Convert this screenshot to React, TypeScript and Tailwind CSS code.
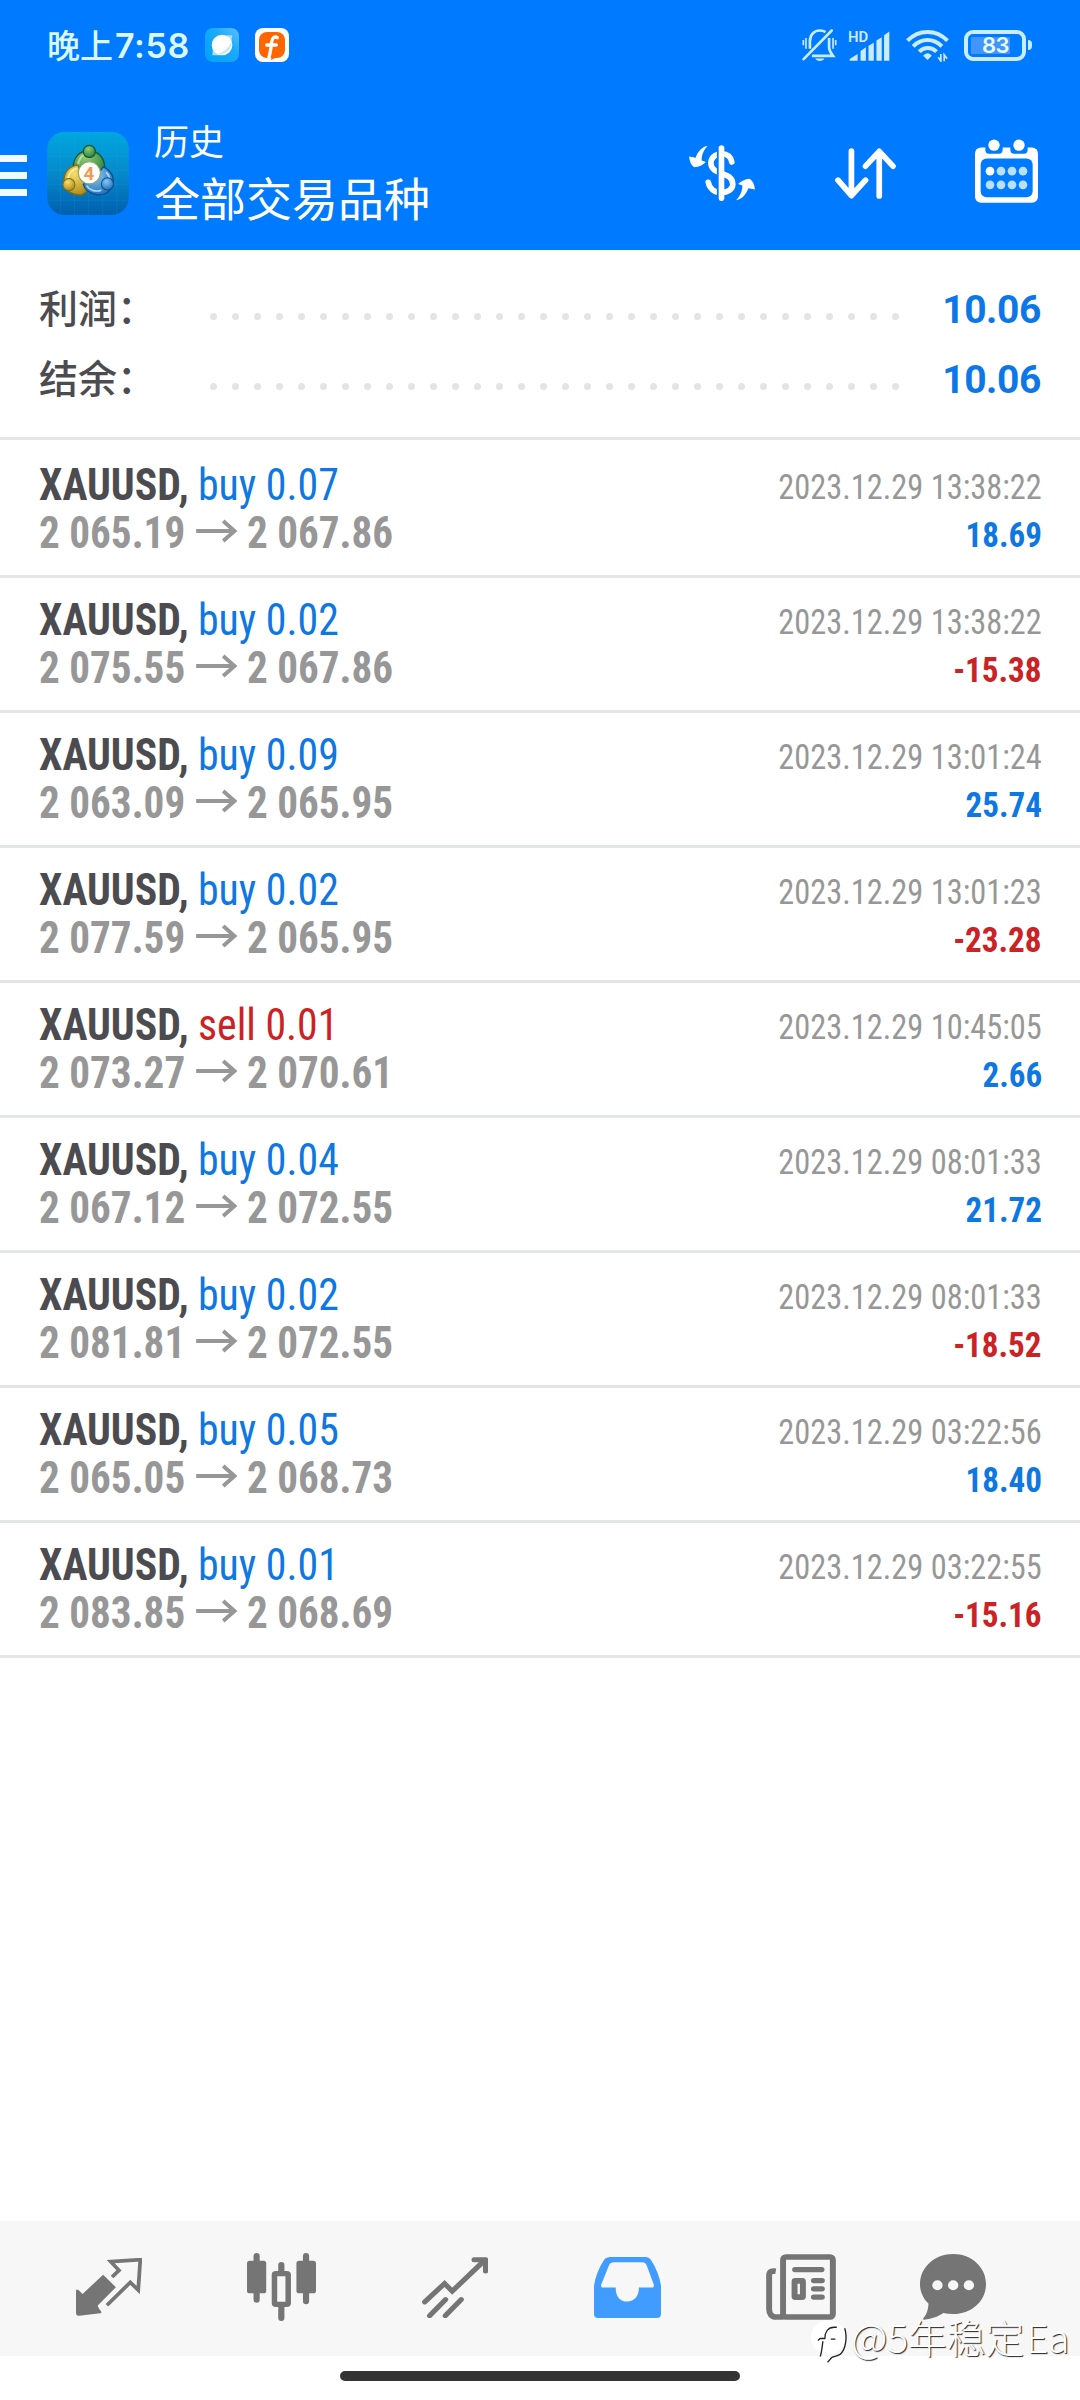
import React from "react";

const summary = [
  { label: "利润：", value: "10.06" },
  { label: "结余：", value: "10.06" },
];

const deals = [
  { type: "buy", volume: "0.07", open: "2 065.19", close: "2 067.86", time: "2023.12.29 13:38:22", profit: "18.69" },
  { type: "buy", volume: "0.02", open: "2 075.55", close: "2 067.86", time: "2023.12.29 13:38:22", profit: "-15.38" },
  { type: "buy", volume: "0.09", open: "2 063.09", close: "2 065.95", time: "2023.12.29 13:01:24", profit: "25.74" },
  { type: "buy", volume: "0.02", open: "2 077.59", close: "2 065.95", time: "2023.12.29 13:01:23", profit: "-23.28" },
  { type: "sell", volume: "0.01", open: "2 073.27", close: "2 070.61", time: "2023.12.29 10:45:05", profit: "2.66" },
  { type: "buy", volume: "0.04", open: "2 067.12", close: "2 072.55", time: "2023.12.29 08:01:33", profit: "21.72" },
  { type: "buy", volume: "0.02", open: "2 081.81", close: "2 072.55", time: "2023.12.29 08:01:33", profit: "-18.52" },
  { type: "buy", volume: "0.05", open: "2 065.05", close: "2 068.73", time: "2023.12.29 03:22:56", profit: "18.40" },
  { type: "buy", volume: "0.01", open: "2 083.85", close: "2 068.69", time: "2023.12.29 03:22:55", profit: "-15.16" },
];

const MutedBell = () => (
  <svg viewBox="0 0 106 102" className="h-[34px] w-[35px]" fill="none" stroke="#c9ecff" strokeWidth="8">
    <path d="M24 62V40C24 18 38 7 54 7C60 7 66 8 71 12" />
    <path d="M82 30V58C82 70 88 76 94 84H30" />
    <path d="M5 94L90 7" strokeLinecap="round" />
    <path d="M40 92H68C64 102 44 102 40 92Z" fill="#c9ecff" stroke="none" />
    <path d="M4 36V52M12 30V62M94 30V62M102 36V52" strokeWidth="5" />
  </svg>
);

const Signal = () => (
  <svg viewBox="0 0 124 98" className="h-[33px] w-[41px] overflow-visible" fill="#c9ecff">
    <text x="-3" y="38" fontSize="45" fontWeight="600" fontFamily="Roboto, sans-serif">HD</text>
    <path d="M2 95V90L26 75V95ZM35 95V66L51 54V95ZM59 95V50L75 41V95ZM83 95V34L99 24V95ZM106 95V18L122 7V95Z" />
  </svg>
);

const Wifi = () => (
  <svg viewBox="0 0 128 102" className="h-[34px] w-[43px]" fill="none" stroke="#c9ecff" strokeWidth="12">
    <path d="M4 38C38 3 90 3 124 38" />
    <path d="M21 55C46 30 82 30 107 55" />
    <path d="M39 71C54 56 76 56 91 71" />
    <path d="M64 96L51 83C58 73 70 73 77 83Z" fill="#c9ecff" stroke="none" />
    <path d="M104 78V99L96 88M114 100V80L123 92" strokeWidth="5" />
  </svg>
);

const Battery = () => (
  <div className="flex items-center gap-[2px]">
    <div className="flex h-[31px] w-[62px] items-center rounded-[9px] border-4 border-[#c9ecff] px-[3px]">
      <div className="flex h-[17px] w-[39px] items-center justify-end bg-[#4096fb]">
        <span className="mr-[1px] font-['Inter'] text-[22px] font-semibold leading-none tracking-[-0.5px] text-[#e8fbff]">83</span>
      </div>
    </div>
    <div className="h-[10px] w-1 rounded-r bg-[#c9ecff]" />
  </div>
);

const MessengerBadge = () => (
  <svg viewBox="0 0 102 102" className="size-[34px]">
    <defs>
      <linearGradient id="badge" x1="0" y1="1" x2="1" y2="0">
        <stop offset="0" stopColor="#00a2f5" />
        <stop offset="0.6" stopColor="#1aa9fb" />
        <stop offset="1" stopColor="#5fc0ff" />
      </linearGradient>
    </defs>
    <rect width="102" height="102" rx="24" fill="url(#badge)" />
    <path d="M22 82L24 60L66 22L82 22L78 50L44 82Z" fill="#a9dcff" />
    <circle cx="51" cy="51" r="31" fill="#fff" />
    <path d="M80 38C82 62 62 82 36 78C56 74 74 58 80 38Z" fill="#c6e3fa" />
  </svg>
);

const OrangeBadge = () => (
  <svg viewBox="0 0 102 102" className="size-[34px]">
    <rect width="102" height="102" rx="24" fill="#fff" />
    <rect x="12" y="12" width="78" height="78" rx="24" fill="#ff6600" />
    <path d="M67 29C60 24 52 28 50 42C48 60 46 74 42 88M35 51H64" fill="none" stroke="#fff" strokeWidth="10" strokeLinecap="round" />
    <path d="M48 97L51 80L66 86Z" fill="#ff6600" />
  </svg>
);

const MetaTraderLogo = () => (
  <svg viewBox="0 0 244 248" className="h-[83px] w-[82px]">
    <defs>
      <linearGradient id="tile" x1="0" y1="0" x2="0" y2="1">
        <stop offset="0" stopColor="#00a7e0" />
        <stop offset="0.5" stopColor="#0689cb" />
        <stop offset="1" stopColor="#005fae" />
      </linearGradient>
      <radialGradient id="green" cx="0.4" cy="0.3" r="0.8">
        <stop offset="0" stopColor="#8fca78" />
        <stop offset="1" stopColor="#1f7a38" />
      </radialGradient>
      <radialGradient id="yellow" cx="0.4" cy="0.3" r="0.8">
        <stop offset="0" stopColor="#f5df6a" />
        <stop offset="1" stopColor="#a9820f" />
      </radialGradient>
      <radialGradient id="blue" cx="0.4" cy="0.3" r="0.8">
        <stop offset="0" stopColor="#86c8f2" />
        <stop offset="1" stopColor="#1769b5" />
      </radialGradient>
    </defs>
    <rect width="244" height="248" rx="52" fill="url(#tile)" />
    <path d="M40 0V248M82 0V248M124 0V248M166 0V248M208 0V248M0 30H244M0 72H244M0 114H244M0 156H244M0 204H244" stroke="#35b8ea" strokeOpacity="0.2" strokeWidth="2" />
    <path d="M78 106C78 74 98 56 124 56C152 56 172 76 172 108C172 120 166 128 160 132L90 128C82 122 78 116 78 106Z" fill="url(#green)" stroke="#17592e" strokeWidth="4" />
    <path d="M92 104C92 82 104 68 118 66" fill="none" stroke="#b5dc9c" strokeWidth="6" />
    <path d="M92 98C62 102 48 124 50 152C54 178 76 190 104 188L128 172L104 132Z" fill="url(#yellow)" stroke="#7e6a1c" strokeWidth="4" />
    <path d="M62 138C66 122 76 112 90 108" fill="none" stroke="#fbeea0" strokeWidth="6" />
    <path d="M168 104C192 116 200 136 196 156C190 182 166 192 142 186C122 182 112 172 108 156L146 132Z" fill="url(#blue)" stroke="#0d4f8e" strokeWidth="4" />
    <path d="M118 160C126 174 144 180 162 174M176 120C186 130 188 140 186 148" fill="none" stroke="#a9dbfa" strokeWidth="5" />
    <circle cx="126" cy="58" r="18" fill="url(#green)" stroke="#17592e" strokeWidth="4" />
    <circle cx="65" cy="157" r="18" fill="url(#yellow)" stroke="#7e6a1c" strokeWidth="3" />
    <circle cx="180" cy="155" r="18" fill="url(#blue)" stroke="#0d4f8e" strokeWidth="3" />
    <circle cx="126" cy="122" r="33" fill="#fffdf8" stroke="#8aa06c" strokeWidth="3" />
    <text x="125" y="142" textAnchor="middle" fontSize="56" fontWeight="700" fontFamily="Roboto, sans-serif" fill="#ee9a5a">4</text>
  </svg>
);

const CurrencyIcon = () => (
  <svg viewBox="0 0 199 168" className="h-14 w-[66px]">
    <path d="M129 51C126 33 114 26 98 26C78 26 66 40 66 53C66 74 84 80 98 85C116 91 132 98 132 118C132 134 116 143 98 143C78 143 62 132 58 112" fill="none" stroke="#fff" strokeWidth="17" strokeLinecap="round" />
    <path d="M93 0V168" stroke="#007aff" strokeWidth="18" />
    <path d="M98 9V160" stroke="#fff" strokeWidth="17" strokeLinecap="round" />
    <g fill="#fff">
      <path id="swap" d="M57 2C42 4 28 16 20 38L0 34C2 50 6 60 16 67C30 66 42 60 51 51L38 46C38 28 46 12 57 2Z" />
      <use href="#swap" transform="rotate(180 99.5 84)" />
    </g>
  </svg>
);

const SortIcon = () => (
  <svg viewBox="0 0 182 152" className="h-[51px] w-[61px]" fill="none" stroke="#fff" strokeWidth="17" strokeLinecap="round" strokeLinejoin="round">
    <path d="M49 9V140M9 96L49 142L91 96" />
    <path d="M132 143V12M91 54L132 10L173 54" />
  </svg>
);

const CalendarIcon = () => (
  <svg viewBox="0 0 189 191" className="h-16 w-[63px]">
    <rect y="25" width="189" height="166" rx="18" fill="#fff" />
    <path d="M31 12H83V32C83 40 79 44 72 44H42C35 44 31 40 31 32ZM106 12H158V32C158 40 154 44 147 44H117C110 44 106 40 106 32Z" fill="#007aff" />
    <circle cx="57" cy="18" r="17" fill="#fff" />
    <circle cx="132" cy="18" r="17" fill="#fff" />
    <rect x="17" y="58" width="156" height="116" rx="18" fill="#007aff" />
    {[45, 78, 111, 144].map((x, i) => (
      <g key={x} fill="#b9e0ff">
        <circle cx={x} cy="96" r="13" fill={i === 0 ? "#fff" : undefined} />
        <circle cx={x} cy="137" r="13" />
      </g>
    ))}
  </svg>
);

const QuotesIcon = () => (
  <svg viewBox="0 0 192 174" preserveAspectRatio="none" className="h-[58px] w-[66px]">
    <path d="M79 50L116 88L64 142C62 146 68 152 74 162C74 165 72 166 70 166L10 173C4 174 0 171 0 166V99C0 93 4 93 8 97L19 108Z" fill="#757575" />
    <path d="M105 57L125 37L101 11L187 5L181 96L158 73L90 142" fill="none" stroke="#757575" strokeWidth="11" />
  </svg>
);

const ChartIcon = () => (
  <svg viewBox="0 0 201 204" preserveAspectRatio="none" className="h-[68px] w-[69px]">
    <path d="M28 9V140M172 9V145M100 36V60M100 160V195" stroke="#757575" strokeWidth="18" strokeLinecap="round" />
    <rect y="23" width="56" height="98" rx="8" fill="#757575" />
    <rect x="144" y="23" width="57" height="98" rx="8" fill="#757575" />
    <rect x="80" y="62" width="40" height="92" rx="4" fill="#f7f7f7" stroke="#757575" strokeWidth="16" />
  </svg>
);

const TradeIcon = () => (
  <svg viewBox="0 0 190 182" preserveAspectRatio="none" className="h-[61px] w-[66px]" fill="none" stroke="#757575" strokeWidth="15" strokeLinecap="round">
    <path d="M8 134L65 79L87 102L180 10" />
    <path d="M150 8H183V42" strokeLinejoin="round" />
    <path d="M22 175L68 127M67 175L113 127" />
  </svg>
);

const HistoryIcon = () => (
  <svg viewBox="0 0 194 182" preserveAspectRatio="none" className="h-[61px] w-[67px]">
    <path fillRule="evenodd" d="M48 0H149C156 0 161 3 165 9C180 33 190 58 194 86V170C194 178 190 182 182 182H12C4 182 0 178 0 170V86C4 58 14 33 29 9C34 2 40 0 48 0ZM58 16C51 16 46 19 43 26L21 82C20 88 21 91 26 91H63C62 115 74 133 96 133C118 133 131 115 130 91H168C173 91 174 88 173 82L153 26C150 19 146 16 139 16Z" fill="#409cff" />
  </svg>
);

const NewsIcon = () => (
  <svg viewBox="0 0 201 199" preserveAspectRatio="none" className="h-[66px] w-[70px]">
    <path d="M28 52C16 50 9 54 9 64V166C9 180 16 190 28 190H50" fill="none" stroke="#757575" strokeWidth="17" />
    <rect x="49" y="9" width="143" height="181" rx="8" fill="none" stroke="#757575" strokeWidth="17" />
    <rect x="82" y="81" width="24" height="49" rx="2" fill="none" stroke="#757575" strokeWidth="17" />
    <path d="M83 47H160M137 80H161M137 105H161M137 130H161" stroke="#757575" strokeWidth="16" strokeLinecap="round" />
  </svg>
);

const ChatIcon = () => (
  <svg viewBox="0 0 193 199" preserveAspectRatio="none" className="h-[66px] w-[66px]">
    <path d="M97 0C151 0 193 40 193 91C193 142 151 181 97 181C87 181 77 180 68 178C54 188 36 196 12 198C8 198 8 195 11 192C18 184 24 170 25 150C9 134 0 114 0 91C0 40 43 0 97 0Z" fill="#757575" />
    <g fill="#f7f7f7">
      <circle cx="51" cy="94" r="15" />
      <circle cx="97" cy="94" r="15" />
      <circle cx="143" cy="94" r="15" />
    </g>
  </svg>
);

const Arrow = () => (
  <svg viewBox="0 0 44 24" className="-mt-1 ml-[12px] mr-[10px] h-6 w-[44px] shrink-0" fill="none" stroke="#979797" strokeWidth="4.2">
    <path d="M0 12H41M29 2L41 12L29 22" />
  </svg>
);

const StatusBar = () => (
  <div className="flex h-[90px] items-center justify-between pl-[47px] pr-[48px]">
    <div className="flex items-center">
      <span className="w-[158px] whitespace-nowrap font-['Noto_Sans_CJK_SC'] text-[33px] font-medium leading-none text-[#dcf8ff]">
        晚上<span className="ml-[2px] font-['Inter'] text-[34px] font-semibold tracking-[0.6px]">7:58</span>
      </span>
      <MessengerBadge />
      <div className="w-4" />
      <OrangeBadge />
    </div>
    <div className="flex items-center">
      <MutedBell />
      <div className="ml-3">
        <Signal />
      </div>
      <div className="ml-[16px] mr-[15px]">
        <Wifi />
      </div>
      <Battery />
    </div>
  </div>
);

const Header = () => (
  <header className="h-[250px] bg-[#007aff]">
    <StatusBar />
    <div className="flex h-[160px] items-center">
      <div className="mt-[10px] flex flex-col gap-[10px]">
        <div className="h-[7px] w-[27px] bg-[#effcff]" />
        <div className="h-[7px] w-[27px] bg-[#effcff]" />
        <div className="h-[7px] w-[27px] bg-[#effcff]" />
      </div>
      <div className="ml-5 mt-[6px]">
        <MetaTraderLogo />
      </div>
      <div className="ml-[25px] mt-px flex flex-col font-['Noto_Sans_CJK_SC'] text-white">
        <span className="text-[35px] leading-[50px]">历史</span>
        <span className="text-[46px] leading-[62px]">全部交易品种</span>
      </div>
      <div className="ml-auto mr-[42px] mt-[6px] flex items-center">
        <CurrencyIcon />
        <div className="ml-20 mr-[79px]">
          <SortIcon />
        </div>
        <div className="-mt-1">
          <CalendarIcon />
        </div>
      </div>
    </div>
  </header>
);

const Summary = () => (
  <section className="h-[190px] border-b-[3px] border-[#e5e6e6] pl-[39px] pr-[39px] pt-[25px]">
    {summary.map((row) => (
      <div key={row.label} className="flex h-[70px] items-center">
        <span className="w-[171px] pb-2 font-['Noto_Sans_CJK_SC'] text-[39px] font-medium leading-none text-[#4c4c50]">{row.label}</span>
        <div className="mt-[13px] flex gap-[15px]">
          {Array.from({ length: 32 }, (_, i) => (
            <div key={i} className="size-[7px] rounded-full bg-[#e4e4e4]" />
          ))}
        </div>
        <span className="ml-auto font-['Roboto'] text-[39px] font-bold leading-[70px] tracking-[-0.4px] text-[#0d77e8]">{row.value}</span>
      </div>
    ))}
  </section>
);

const DealRow = ({ deal, first }) => (
  <div className={`flex justify-between border-b-[3px] border-[#e4e5e5] pl-[39px] pr-[38px] font-['Roboto_Condensed'] ${first ? "h-[138px] pt-[3px]" : "h-[135px]"}`}>
    <div className="flex flex-col pt-[18px] text-[44px] leading-[48px]">
      <div className="flex whitespace-nowrap">
        <span className="w-[159px] origin-left scale-x-[0.95] font-bold text-[#4c4c50]">XAUUSD,</span>
        <span className={`origin-left scale-x-[0.95] ${deal.type === "buy" ? "text-[#0d77e2]" : "text-[#cb2226]"}`}>
          {deal.type} {deal.volume}
        </span>
      </div>
      <div className="flex origin-left scale-x-[0.935] items-center whitespace-nowrap font-bold text-[#979797]">
        <span>{deal.open}</span>
        <Arrow />
        <span>{deal.close}</span>
      </div>
    </div>
    <div className="flex flex-col items-end pt-[21px] text-[35px] leading-[48px]">
      <span className="origin-right scale-x-[0.925] text-[#979797]">{deal.time}</span>
      <span className={`origin-right scale-x-[0.945] font-bold ${deal.profit.startsWith("-") ? "text-[#cb2226]" : "text-[#0d77e2]"}`}>{deal.profit}</span>
    </div>
  </div>
);

const BottomNav = () => {
  const tabs = [QuotesIcon, ChartIcon, TradeIcon, HistoryIcon, NewsIcon];

  return (
    <nav className="flex h-[135px] items-center bg-[#f7f7f7] pb-[3px] pl-[22px]">
      {tabs.map((Icon, i) => (
        <button key={i} className="flex w-[173px] justify-center">
          <Icon />
        </button>
      ))}
      <button className="flex w-[132px] justify-center">
        <ChatIcon />
      </button>
    </nav>
  );
};

const Watermark = () => (
  <div className="absolute left-[810px] top-[2308px] flex items-center">
    <svg viewBox="0 0 113 130" className="mt-[12px] h-[43px] w-[38px]">
      <circle cx="54" cy="52" r="52" fill="#fff" />
      <path d="M23 62L30 56H44C44 36 54 22 72 22H80M30 110C34 100 36 80 38 64M62 58H76M104 25C112 50 108 90 90 104C76 112 68 110 64 114L52 128" fill="none" stroke="#222" strokeWidth="4" />
    </svg>
    <span className="ml-[3px] whitespace-nowrap font-['Noto_Sans_CJK_SC'] text-[38.7px] font-light leading-[48px] text-white [text-shadow:1px_1px_1px_#222]">
      <span className="text-[40px]">@</span>5年稳定<span className="ml-[2px]">Ea</span>
    </span>
  </div>
);

export default function App() {
  return (
    <div className="relative flex h-[2400px] w-[1080px] flex-col overflow-hidden bg-white">
      <Header />
      <Summary />
      <main className="flex-1">
        {deals.map((deal, i) => (
          <DealRow key={i} deal={deal} first={i === 0} />
        ))}
      </main>
      <BottomNav />
      {/* Gesture bar */}
      <div className="flex h-11 justify-center pt-[15px]">
        <div className="h-[10px] w-[400px] rounded-full bg-[#333]" />
      </div>
      <Watermark />
    </div>
  );
}
